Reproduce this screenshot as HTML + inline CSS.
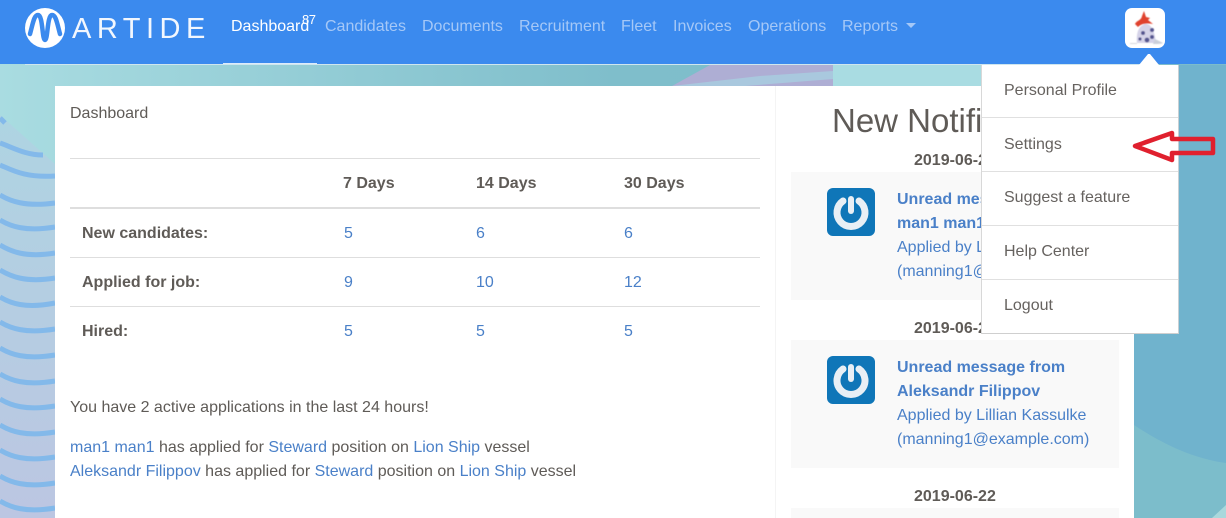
<!DOCTYPE html>
<html>
<head>
<meta charset="utf-8">
<style>
html,body{margin:0;padding:0;width:1226px;height:518px;overflow:hidden;font-family:"Liberation Sans",sans-serif;font-size:16px;color:#5f5b57}
body{position:relative;background:#8cc6d3}
div,a,span,svg{position:absolute;white-space:nowrap}
a{color:#4a80c8;text-decoration:none}
.t{line-height:24px}
.nav{top:15px;line-height:24px;color:#a5c8f7}
.b{font-weight:bold}
.rule{height:1px;background:#dedede;left:70px;width:690px}
.mi{left:1004px;line-height:24px;color:#66625f}
.ms{left:982px;width:196px;height:1px;background:#e0e0e0}
.c{left:791px;width:328px;height:128px;background:#f9f9f9}
.lk{left:897px;line-height:24px;color:#4a80c8}
.lk.b{color:#4a80c8}
</style>
</head>
<body>
<svg style="left:0;top:0" width="1226" height="518" viewBox="0 0 1226 518">
<defs>
<linearGradient id="bg" x1="0" y1="0" x2="1" y2="0"><stop offset="0" stop-color="#a9dce1"/><stop offset=".5" stop-color="#7fbecb"/><stop offset="1" stop-color="#7cbccb"/></linearGradient>
<linearGradient id="lf" x1="0" y1="0" x2="0" y2="1"><stop offset="0" stop-color="#aed4e2"/><stop offset="1" stop-color="#bcc6e2"/></linearGradient>
</defs>
<rect width="1226" height="518" fill="url(#bg)"/>
<rect x="833" y="60" width="160" height="30" fill="#a9dce2"/>
<path d="M672 86L710 65H833V86Z" fill="#aeaed4"/>
<path d="M672 86L760 76L833 71V79L745 86Z" fill="#a9c8de"/>
<rect x="1134" y="65" width="92" height="453" fill="#70b3cd"/>
<path d="M1134 425C1160 442 1190 458 1226 463V518H1134Z" fill="#7cbdcb"/>
<path d="M1212 518L1226 505V518Z" fill="#a9d8dc"/>
<path d="M0 115L55 164V518H0Z" fill="url(#lf)"/>
<g fill="none" stroke="#83b9ea" stroke-width="5">
<path d="M0 118L5 123"/>
<path d="M0 143C12 147 25 155 43 155"/>
<path d="M0 165C12 170 25 178 55 176"/>
<path d="M0 195C10 201 25 207 55 203"/>
<path d="M0 220C10 226 25 232 55 227"/>
<path d="M0 245C10 251 25 258 55 253"/>
<path d="M0 270C10 276 25 283 55 278"/>
<path d="M0 297C10 303 25 309 55 303"/>
<path d="M0 322C10 328 25 334 55 329"/>
<path d="M0 348C10 354 25 360 55 355"/>
<path d="M0 374C10 380 25 386 55 381"/>
<path d="M0 399C10 405 25 411 55 406"/>
<path d="M0 425C10 431 25 437 55 432"/>
<path d="M0 450C10 456 25 462 55 457"/>
<path d="M0 476C10 482 25 488 55 483"/>
<path d="M0 501C10 507 25 513 55 508"/>
</g>
</svg>

<div style="left:0;top:0;width:1226px;height:64px;background:#3b8aee"></div>
<div style="left:25px;top:64px;width:1115px;height:1px;background:#cfe6ee"></div>
<div style="left:223px;top:63px;width:94px;height:1px;background:#dcebfb"></div>

<svg style="left:25px;top:8px" width="40" height="40" viewBox="0 0 40 40">
<circle cx="20" cy="20" r="20" fill="#fff"/>
<path d="M5 26C8 15 9 7 13 7C18 7 17 32 20 32C23 32 22 7 27 7C31 7 32 15 35 26" fill="none" stroke="#3b8aee" stroke-width="4.500" stroke-linecap="round"/>
</svg>
<div style="left:72px;top:13px;line-height:32px;font-size:29px;letter-spacing:5.500px;color:#f2f7fe">ARTIDE</div>

<div class="nav" style="left:231px;color:#fff">Dashboard</div>
<div style="left:302px;top:13px;font-size:13px;letter-spacing:-.5px;line-height:14px;color:#fff">87</div>
<div class="nav" style="left:325px">Candidates</div>
<div class="nav" style="left:422px">Documents</div>
<div class="nav" style="left:519px">Recruitment</div>
<div class="nav" style="left:621px">Fleet</div>
<div class="nav" style="left:673px">Invoices</div>
<div class="nav" style="left:748px">Operations</div>
<div class="nav" style="left:842px">Reports</div>
<svg style="left:906px;top:23px" width="10" height="6"><path d="M0 0H10L5 5Z" fill="#a5c8f7"/></svg>

<svg style="left:1125px;top:8px" width="40" height="40" viewBox="0 0 40 40">
<defs><filter id="soft" x="-20%" y="-20%" width="140%" height="140%"><feGaussianBlur stdDeviation=".6"/></filter></defs>
<rect width="40" height="40" rx="7" fill="#fff"/>
<g filter="url(#soft)">
<path d="M12 35C11 26 13 18 20 16C27 15 30 26 31 35Z" fill="#d5d3e8"/>
<path d="M30 31L38 35C36 36 32 36 28 36Z" fill="#ccd0da"/>
<path d="M5 35H12V36H5Z" fill="#d8d8de"/>
<path d="M10 16C12 12 16 13 17 8L19 3L21 9L25 10L23 12L28 16C23 15 17 15 13 19Z" fill="#e0432e"/>
<g fill="#55558f"><circle cx="18" cy="25" r="2"/><circle cx="27" cy="22" r="2"/><circle cx="15" cy="31" r="1.600"/><circle cx="22" cy="32" r="2.400"/><circle cx="27" cy="29" r="2"/></g>
</g>
</svg>

<!-- main panel -->
<div style="left:55px;top:86px;width:1079px;height:432px;background:#fff"></div>
<div style="left:775px;top:86px;width:1px;height:432px;background:#f4f4f4"></div>

<div class="t" style="left:70px;top:102px">Dashboard</div>
<div class="rule" style="top:158px"></div>
<div class="rule" style="top:207px;height:2px"></div>
<div class="rule" style="top:257px"></div>
<div class="rule" style="top:306px"></div>

<div class="t b" style="left:343px;top:172px">7 Days</div>
<div class="t b" style="left:476px;top:172px">14 Days</div>
<div class="t b" style="left:624px;top:172px">30 Days</div>

<div class="t b" style="left:82px;top:222px">New candidates:</div>
<a class="t" style="left:344px;top:222px">5</a>
<a class="t" style="left:476px;top:222px">6</a>
<a class="t" style="left:624px;top:222px">6</a>

<div class="t b" style="left:82px;top:271px">Applied for job:</div>
<a class="t" style="left:344px;top:271px">9</a>
<a class="t" style="left:476px;top:271px">10</a>
<a class="t" style="left:624px;top:271px">12</a>

<div class="t b" style="left:82px;top:320px">Hired:</div>
<a class="t" style="left:344px;top:320px">5</a>
<a class="t" style="left:476px;top:320px">5</a>
<a class="t" style="left:624px;top:320px">5</a>

<div class="t" style="left:70px;top:396px">You have 2 active applications in the last 24 hours!</div>
<div class="t" style="left:70px;top:436px"><a style="position:static">man1 man1</a> has applied for <a style="position:static">Steward</a> position on <a style="position:static">Lion Ship</a> vessel</div>
<div class="t" style="left:70px;top:460px"><a style="position:static">Aleksandr Filippov</a> has applied for <a style="position:static">Steward</a> position on <a style="position:static">Lion Ship</a> vessel</div>

<!-- notifications -->
<div style="left:832px;top:101px;font-size:33px;line-height:40px;width:149px;overflow:hidden">New Notifications</div>

<div class="t b" style="left:914px;top:149px;width:67px;overflow:hidden">2019-06-22</div>
<div class="c" style="top:172px"></div>
<svg style="left:827px;top:188px" width="48" height="48" viewBox="0 0 48 48">
<rect width="48" height="48" rx="6" fill="#0f76b8"/>
<path d="M16 13A14 14 0 1 0 32 13" fill="none" stroke="#e8eff5" stroke-width="7" stroke-linecap="round"/>
<path d="M24 11V23" stroke="#e8eff5" stroke-width="6" stroke-linecap="round"/>
</svg>
<div class="lk b" style="top:188px;width:84px;overflow:hidden">Unread message from</div>
<div class="lk b" style="top:212px;width:84px;overflow:hidden">man1 man1</div>
<div class="lk" style="top:236px;width:84px;overflow:hidden">Applied by Lillian Kassulke</div>
<div class="lk" style="top:260px;width:84px;overflow:hidden">(manning1@example.com)</div>

<div class="t b" style="left:914px;top:317px;width:67px;overflow:hidden">2019-06-22</div>
<div class="c" style="top:340px"></div>
<svg style="left:827px;top:356px" width="48" height="48" viewBox="0 0 48 48">
<rect width="48" height="48" rx="6" fill="#0f76b8"/>
<path d="M16 13A14 14 0 1 0 32 13" fill="none" stroke="#e8eff5" stroke-width="7" stroke-linecap="round"/>
<path d="M24 11V23" stroke="#e8eff5" stroke-width="6" stroke-linecap="round"/>
</svg>
<div class="lk b" style="top:356px">Unread message from</div>
<div class="lk b" style="top:380px">Aleksandr Filippov</div>
<div class="lk" style="top:404px">Applied by Lillian Kassulke</div>
<div class="lk" style="top:428px">(manning1@example.com)</div>

<div class="t b" style="left:914px;top:485px">2019-06-22</div>
<div class="c" style="top:508px;height:10px"></div>

<!-- dropdown -->
<div style="left:981px;top:65px;width:196px;height:268px;background:#fff;border-left:1px solid #d8d8d8;border-right:1px solid #c8d0d4;border-bottom:1px solid #cfcfcf"></div>
<svg style="left:1139px;top:54px" width="20" height="12"><path d="M0 11L9 0H11L20 11Z" fill="#fff"/></svg>
<div class="mi" style="top:79px">Personal Profile</div>
<div class="ms" style="top:117px"></div>
<div class="mi" style="top:133px">Settings</div>
<div class="ms" style="top:171px"></div>
<div class="mi" style="top:186px">Suggest a feature</div>
<div class="ms" style="top:225px"></div>
<div class="mi" style="top:240px">Help Center</div>
<div class="ms" style="top:279px"></div>
<div class="mi" style="top:294px">Logout</div>

<svg style="left:1129px;top:126px" width="90" height="40" viewBox="0 0 90 40">
<path d="M6 20L43 7V13H84V27H43V34Z" fill="none" stroke="#e0202e" stroke-width="4.500" stroke-linejoin="round"/>
</svg>
</body>
</html>
